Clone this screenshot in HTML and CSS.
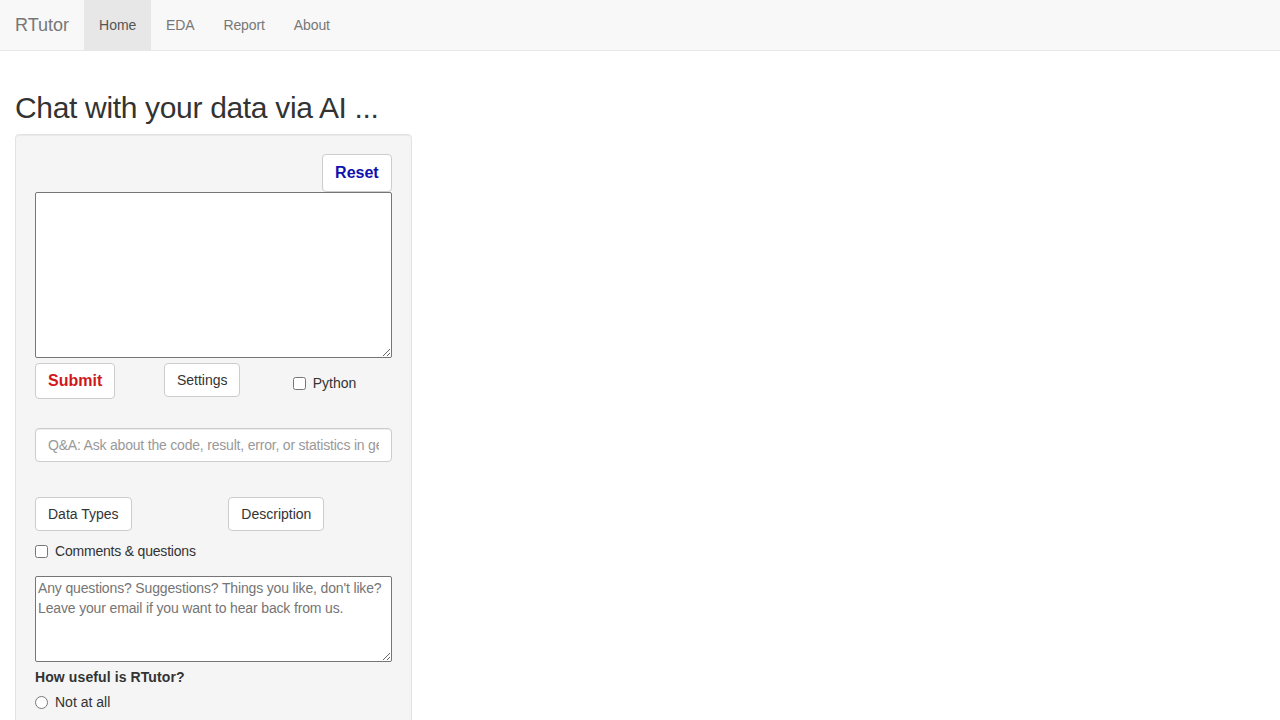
FILE: index.html
```html
<!DOCTYPE html>
<html>
<head>
<meta charset="utf-8">
<title>RTutor</title>
<link rel="stylesheet" href="styles.css">
</head>
<body>
<nav class="navbar">
  <span class="brand">RTutor</span>
  <ul class="nav">
    <li class="active"><a>Home</a></li>
    <li><a>EDA</a></li>
    <li><a>Report</a></li>
    <li><a>About</a></li>
  </ul>
</nav>
<div class="container">
  <h2 class="title">Chat with your data via AI ...</h2>
  <div class="well">
    <div class="reset-row"><button class="btn btn-lg reset">Reset</button></div>
    <textarea class="prompt"></textarea>
    <div class="row3">
      <div class="col"><button class="btn btn-lg submit">Submit</button></div>
      <div class="col"><button class="btn">Settings</button></div>
      <div class="col"><label class="check py"><input type="checkbox"><span>Python</span></label></div>
    </div>
    <input class="form-control qa" type="text" placeholder="Q&amp;A: Ask about the code, result, error, or statistics in general">
    <div class="row2">
      <div class="col"><button class="btn">Data Types</button></div>
      <div class="col"><button class="btn">Description</button></div>
    </div>
    <label class="check comments"><input type="checkbox"><span>Comments &amp; questions</span></label>
    <textarea class="feedback" placeholder="Any questions? Suggestions? Things you like, don't like? Leave your email if you want to hear back from us."></textarea>
    <div class="useful">How useful is RTutor?</div>
    <label class="check radio"><input type="radio" name="u"><span>Not at all</span></label>
  </div>
</div>
</body>
</html>
```
FILE: styles.css
```css
html, body { margin: 0; padding: 0; }
body {
  font-family: "Liberation Sans", Arial, sans-serif;
  font-size: 14px;
  line-height: 20px;
  color: #333;
  background: #fff;
  overflow: hidden;
}
.navbar {
  display: flex;
  height: 50px;
  background: #f8f8f8;
  border-bottom: 1px solid #e7e7e7;
  margin-bottom: 20px;
}
.brand {
  font-size: 18px;
  line-height: 20px;
  padding: 15px;
  color: #777;
}
.nav { display: flex; list-style: none; margin: 0; padding: 0; }
.nav a {
  display: block;
  padding: 15px;
  line-height: 20px;
  color: #777;
}
.nav li:nth-child(n+2) a { padding: 15px 14.5px; letter-spacing: -0.1px; }
.nav .active a { background: #e7e7e7; color: #555; }
.container { padding: 0 15px; display: flow-root; }
.title {
  font-size: 30px;
  font-weight: 400;
  line-height: 33px;
  margin: 20px 0 10px;
  color: #333;
  letter-spacing: -0.33px;
}
.well {
  width: 396.67px;
  box-sizing: border-box;
  padding: 19px;
  background: #f5f5f5;
  border: 1px solid #e3e3e3;
  border-radius: 4px;
  box-shadow: inset 0 1px 1px rgba(0,0,0,.05);
  height: 620px;
}
.btn {
  font-family: inherit;
  font-size: 14px;
  line-height: 20px;
  padding: 6px 12px;
  background: #fff;
  color: #333;
  border: 1px solid #ccc;
  border-radius: 4px;
  cursor: pointer;
}
.btn-lg { font-size: 16px; line-height: 22px; font-weight: 700; padding: 6px 12px; }
.reset { color: #1010b0; }
.submit { color: #d0181c; }
.reset-row { display: flex; justify-content: flex-end; height: 38px; }
textarea { font-family: inherit; }
.prompt {
  display: block;
  width: 100%;
  box-sizing: border-box;
  height: 166px;
  border: 1px solid #767676;
  border-radius: 2px;
  margin: 0 0 5px;
  background: #fff;
}
.row3, .row2 { display: flex; margin: 0 -15px; }
.row3 .col { width: 33.333%; padding: 0 15px; box-sizing: border-box; }
.row2 .col { width: 50%; padding: 0 15px; box-sizing: border-box; }
.check { display: flex; align-items: center; gap: 7px; cursor: pointer; }
.check input { margin: 0; width: 13px; height: 13px; }
.py { margin-top: 10px; }
.qa {
  display: block;
  margin-top: 29px;
  width: 100%;
  box-sizing: border-box;
  height: 34px;
  padding: 6px 12px;
  font-family: inherit;
  font-size: 14px;
  letter-spacing: -0.2px;
  border: 1px solid #ccc;
  border-radius: 4px;
  background: #fff;
  box-shadow: inset 0 1px 1px rgba(0,0,0,.075);
}
.qa::placeholder { color: #999; }
.row2 { margin-top: 35px; }
.comments { margin-top: 10px; }
.comments span { letter-spacing: -0.2px; }
.feedback {
  display: block;
  margin-top: 15px;
  width: 100%;
  box-sizing: border-box;
  height: 86px;
  padding: 1px 2px;
  font-size: 14px;
  line-height: 20px;
  letter-spacing: -0.15px;
  border: 1px solid #767676;
  border-radius: 2px;
  background: #fff;
}
.feedback::placeholder { color: #757575; }
.useful { font-weight: 700; margin-top: 5px; letter-spacing: 0.1px; }
.radio { margin-top: 5px; }
```
